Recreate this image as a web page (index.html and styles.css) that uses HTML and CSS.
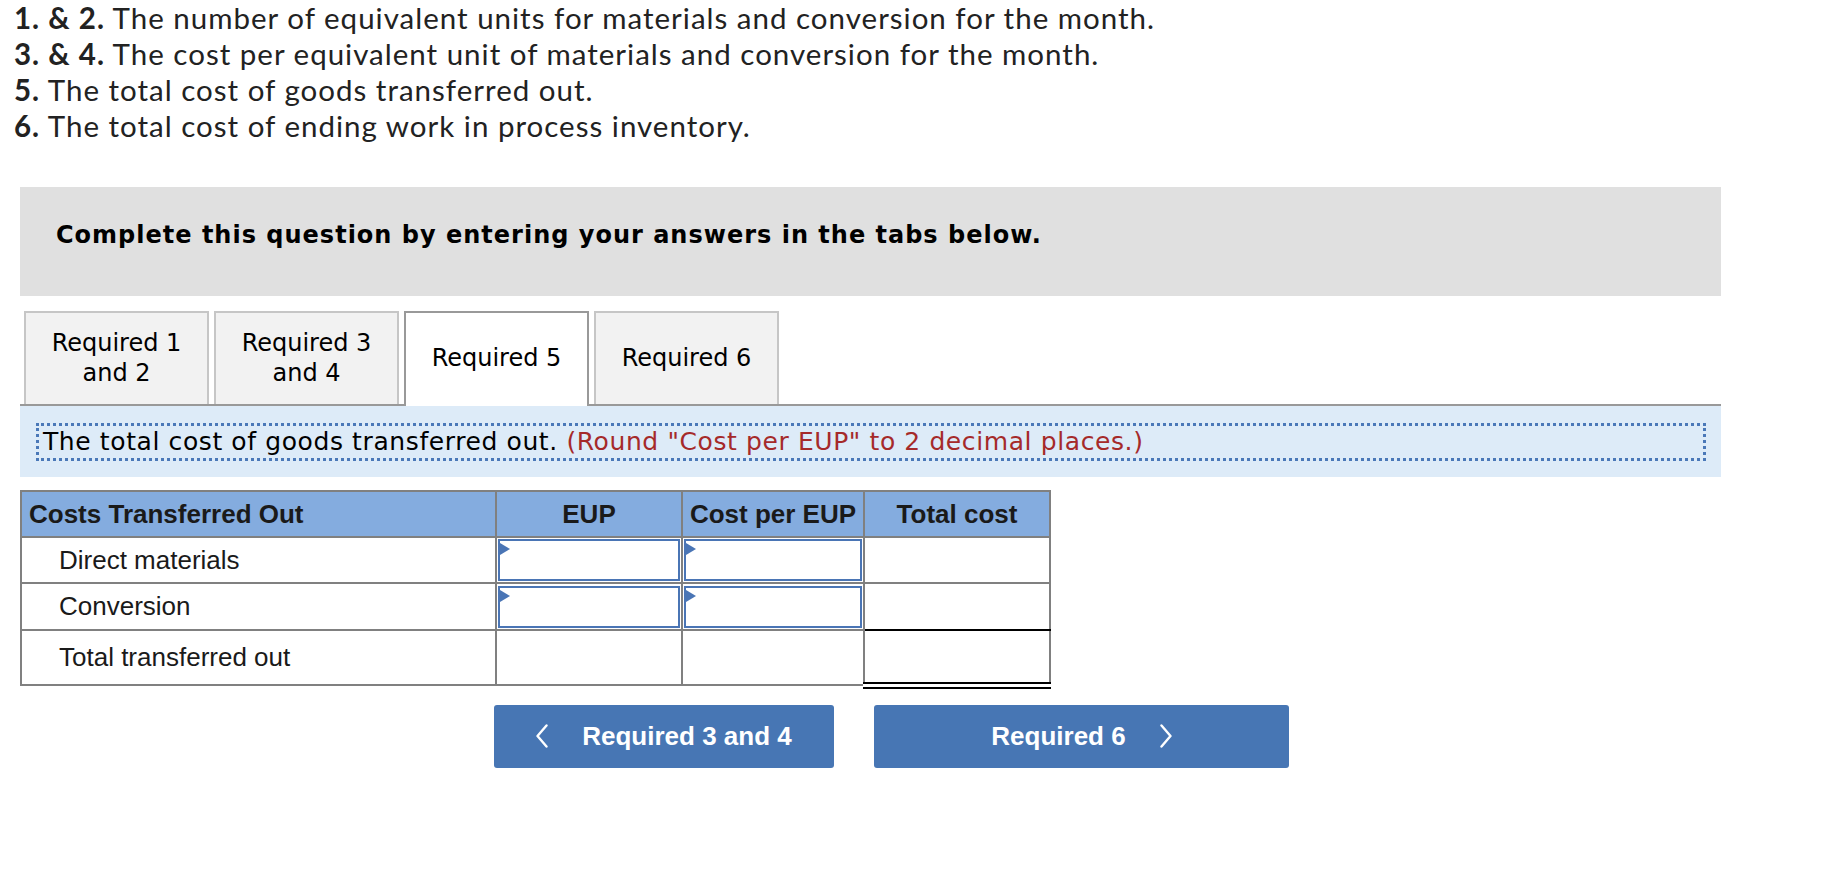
FILE: index.html
```html
<!DOCTYPE html>
<html>
<head>
<meta charset="utf-8">
<link rel="stylesheet" href="styles.css">
</head>
<body>
<div class="page">
  <div class="intro">
    <div class="intro-line"><b>1. &amp; 2.</b> The number of equivalent units for materials and conversion for the month.</div>
    <div class="intro-line"><b>3. &amp; 4.</b> The cost per equivalent unit of materials and conversion for the month.</div>
    <div class="intro-line"><b>5.</b> The total cost of goods transferred out.</div>
    <div class="intro-line"><b>6.</b> The total cost of ending work in process inventory.</div>
  </div>

  <div class="notice">Complete this question by entering your answers in the tabs below.</div>

  <div class="tabs">
    <div class="tab">Required 1<br>and 2</div>
    <div class="tab">Required 3<br>and 4</div>
    <div class="tab active">Required 5</div>
    <div class="tab">Required 6</div>
  </div>

  <div class="info-bar">
    <div class="info-box">The total cost of goods transferred out. <span class="hint">(Round "Cost per EUP" to 2 decimal places.)</span></div>
  </div>

  <table class="grid">
    <thead>
      <tr>
        <th class="c1">Costs Transferred Out</th>
        <th class="c2">EUP</th>
        <th class="c3">Cost per EUP</th>
        <th class="c4">Total cost</th>
      </tr>
    </thead>
    <tbody>
      <tr class="r1">
        <td class="label">Direct materials</td>
        <td class="inp"><div class="field"><span class="flag"></span></div></td>
        <td class="inp"><div class="field"><span class="flag"></span></div></td>
        <td></td>
      </tr>
      <tr class="r2">
        <td class="label">Conversion</td>
        <td class="inp"><div class="field"><span class="flag"></span></div></td>
        <td class="inp"><div class="field"><span class="flag"></span></div></td>
        <td class="sum-line"></td>
      </tr>
      <tr class="r3">
        <td class="label">Total transferred out</td>
        <td></td>
        <td></td>
        <td class="total-line"></td>
      </tr>
    </tbody>
  </table>

  <div class="nav">
    <button class="btn btn-prev">
      <svg class="chev" width="12" height="24" viewBox="0 0 12 24"><polyline points="10.5,1.5 1.5,12 10.5,22.5" fill="none" stroke="#fff" stroke-width="2.4" stroke-linecap="round" stroke-linejoin="round"/></svg>
      <span>Required 3 and 4</span>
    </button>
    <button class="btn btn-next">
      <span>Required 6</span>
      <svg class="chev" width="12" height="24" viewBox="0 0 12 24"><polyline points="1.5,1.5 10.5,12 1.5,22.5" fill="none" stroke="#fff" stroke-width="2.4" stroke-linecap="round" stroke-linejoin="round"/></svg>
    </button>
  </div>
</div>
</body>
</html>
```

FILE: styles.css
```css
* { box-sizing: border-box; }
html, body { margin: 0; padding: 0; background: #fff; }
body { font-family: "Liberation Sans", Arial, sans-serif; color: #1a1a1a; }

.page { padding-left: 20px; width: 1721px; }

.intro { margin-left: -6px; }
.intro-line {
  font-family: "Lato", "Open Sans", sans-serif;
  font-size: 29.5px;
  letter-spacing: 1px;
  line-height: 36px;
  color: #222;
  white-space: nowrap;
}
.intro-line b { font-weight: 700; }

.notice {
  margin-top: 43px;
  background: #e0e0e0;
  height: 109px;
  padding: 33px 0 0 36px;
  font-family: "DejaVu Sans", Verdana, sans-serif;
  font-weight: bold;
  font-size: 24px;
  letter-spacing: 1px;
  line-height: 30px;
  color: #000;
}

.tabs {
  margin-top: 15px;
  display: flex;
  gap: 5px;
  padding-left: 4px;
  height: 93px;
  position: relative;
  z-index: 1;
}
.tab {
  width: 185px;
  height: 93px;
  background: #f2f2f2;
  border: 2px solid #c6c6c6;
  border-bottom: none;
  display: flex;
  align-items: center;
  justify-content: center;
  text-align: center;
  font-family: "DejaVu Sans", Verdana, sans-serif;
  font-size: 24px;
  line-height: 30px;
  color: #000;
  padding-bottom: 2px;
}
.tab.active {
  background: #fff;
  border-color: #999;
  height: 95px;
  padding-bottom: 4px;
}

.info-bar {
  background: #ddebf8;
  border-top: 2px solid #999;
  height: 73px;
  padding: 17px 15px 0 16px;
}
.info-box {
  border: 3px dotted #4a78b8;
  height: 38px;
  padding-left: 4px;
  font-family: "DejaVu Sans", Verdana, sans-serif;
  font-size: 25px;
  letter-spacing: 0.6px;
  line-height: 32px;
  color: #000;
  white-space: nowrap;
}
.hint { color: #a52a2a; }

.grid {
  margin-top: 13px;
  border-collapse: collapse;
  font-size: 26px;
}
.grid th, .grid td {
  border: 2px solid #808080;
  padding: 0;
}
.grid th {
  background: #84acdf;
  height: 46px;
  font-weight: bold;
  color: #1a1a1a;
  text-align: center;
}
.grid th.c1 { text-align: left; padding-left: 7px; width: 475px; }
.grid th.c2 { width: 186px; }
.grid th.c3 { width: 182px; }
.grid th.c4 { width: 186px; }
.grid td.label { padding-left: 37px; color: #1a1a1a; }
.r1 td { height: 45px; }
.r2 td { height: 47px; }
.r3 td { height: 55px; }
.grid td.inp { padding: 1px; }
.field {
  position: relative;
  height: 42px;
  border: 2px solid #4a75b5;
  background: #fff;
}
.flag {
  position: absolute;
  left: 0;
  top: 2px;
  width: 0;
  height: 0;
  border-top: 6.5px solid transparent;
  border-bottom: 6.5px solid transparent;
  border-left: 10px solid #4a75b5;
}
.grid td.sum-line { border-bottom: 2px solid #000; }
.grid td.total-line { border-bottom: 7px double #000; }

.nav {
  margin-top: 16px;
  display: flex;
  gap: 40px;
  padding-left: 474px;
}
.btn {
  height: 63px;
  border: none;
  border-radius: 3px;
  background: #4776b4;
  color: #fff;
  font-family: "Liberation Sans", Arial, sans-serif;
  font-weight: bold;
  font-size: 26px;
  display: flex;
  align-items: center;
  justify-content: center;
  gap: 34px;
  padding: 0;
}
.btn-prev { width: 340px; }
.btn-next { width: 415px; }
.chev { display: block; }
```
